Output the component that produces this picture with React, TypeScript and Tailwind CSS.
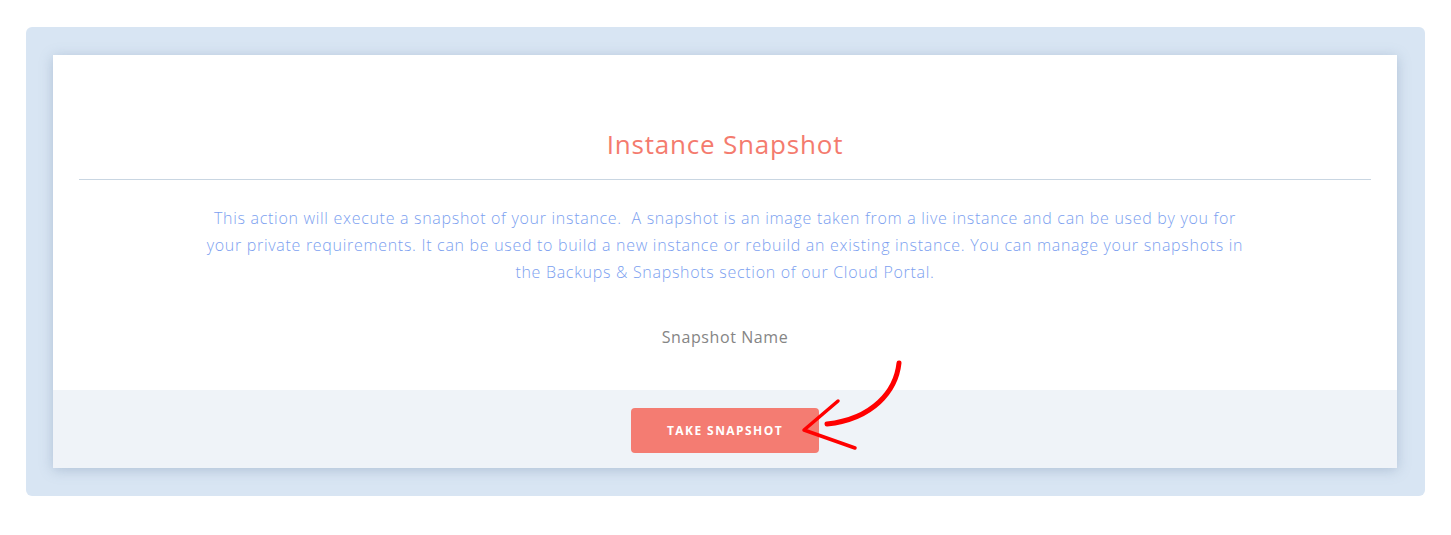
export default function App() {
  return (
    <div className="min-h-screen bg-white pl-[26px] pr-[26px] pt-[27px] font-['Open_Sans',sans-serif]">
      <div className="rounded-md bg-[#d8e5f3] pl-[27px] pr-[28px] pt-[28px] pb-[28px]">
        <div className="bg-white shadow-[0_2px_12px_rgba(100,125,160,0.35)]">
          <div className="px-[26px] pt-[72px] pb-[42px]">
            <h1 className="text-center text-[26px] leading-[34px] font-medium tracking-[0.8px] text-[#f47b6e]">
              Instance Snapshot
            </h1>
            <div className="mt-[18px] h-px bg-[#c9d6e2]" />
            <p className="mt-[25px] text-center text-[16px] leading-[27px] font-light tracking-[0.7px] text-[#7c9ff0]">
              <span className="block">
                This action will execute a snapshot of your instance.&nbsp; A snapshot is an image taken from a live instance and can be used by you for
              </span>
              <span className="block">
                your private requirements. It can be used to build a new instance or rebuild an existing instance. You can manage your snapshots in
              </span>
              <span className="block">the Backups &amp; Snapshots section of our Cloud Portal.</span>
            </p>
            <div className="mt-[40px] text-center text-[16px] leading-[22px] tracking-[0.6px] text-[#858585]">
              Snapshot Name
            </div>
          </div>
          <div className="relative flex justify-center bg-[#eff3f8] pt-[18px] pb-[15px]">
            <button className="h-[45px] w-[188px] rounded bg-[#f47c72] text-[12px] font-bold tracking-[0.12em] text-white">
              TAKE SNAPSHOT
            </button>
            <svg
              className="absolute left-[745px] top-[-29px] overflow-visible"
              width="110"
              height="100"
              viewBox="0 0 110 100"
              fill="none"
            >
              <path
                d="M101 2 C 98 30, 75 58, 29 63"
                stroke="#ff0000"
                strokeWidth="5"
                strokeLinecap="round"
              />
              <path
                d="M40 40 L 6 69 L 57 87"
                stroke="#ff0000"
                strokeWidth="3.5"
                strokeLinecap="round"
                strokeLinejoin="round"
              />
            </svg>
          </div>
        </div>
      </div>
    </div>
  )
}
